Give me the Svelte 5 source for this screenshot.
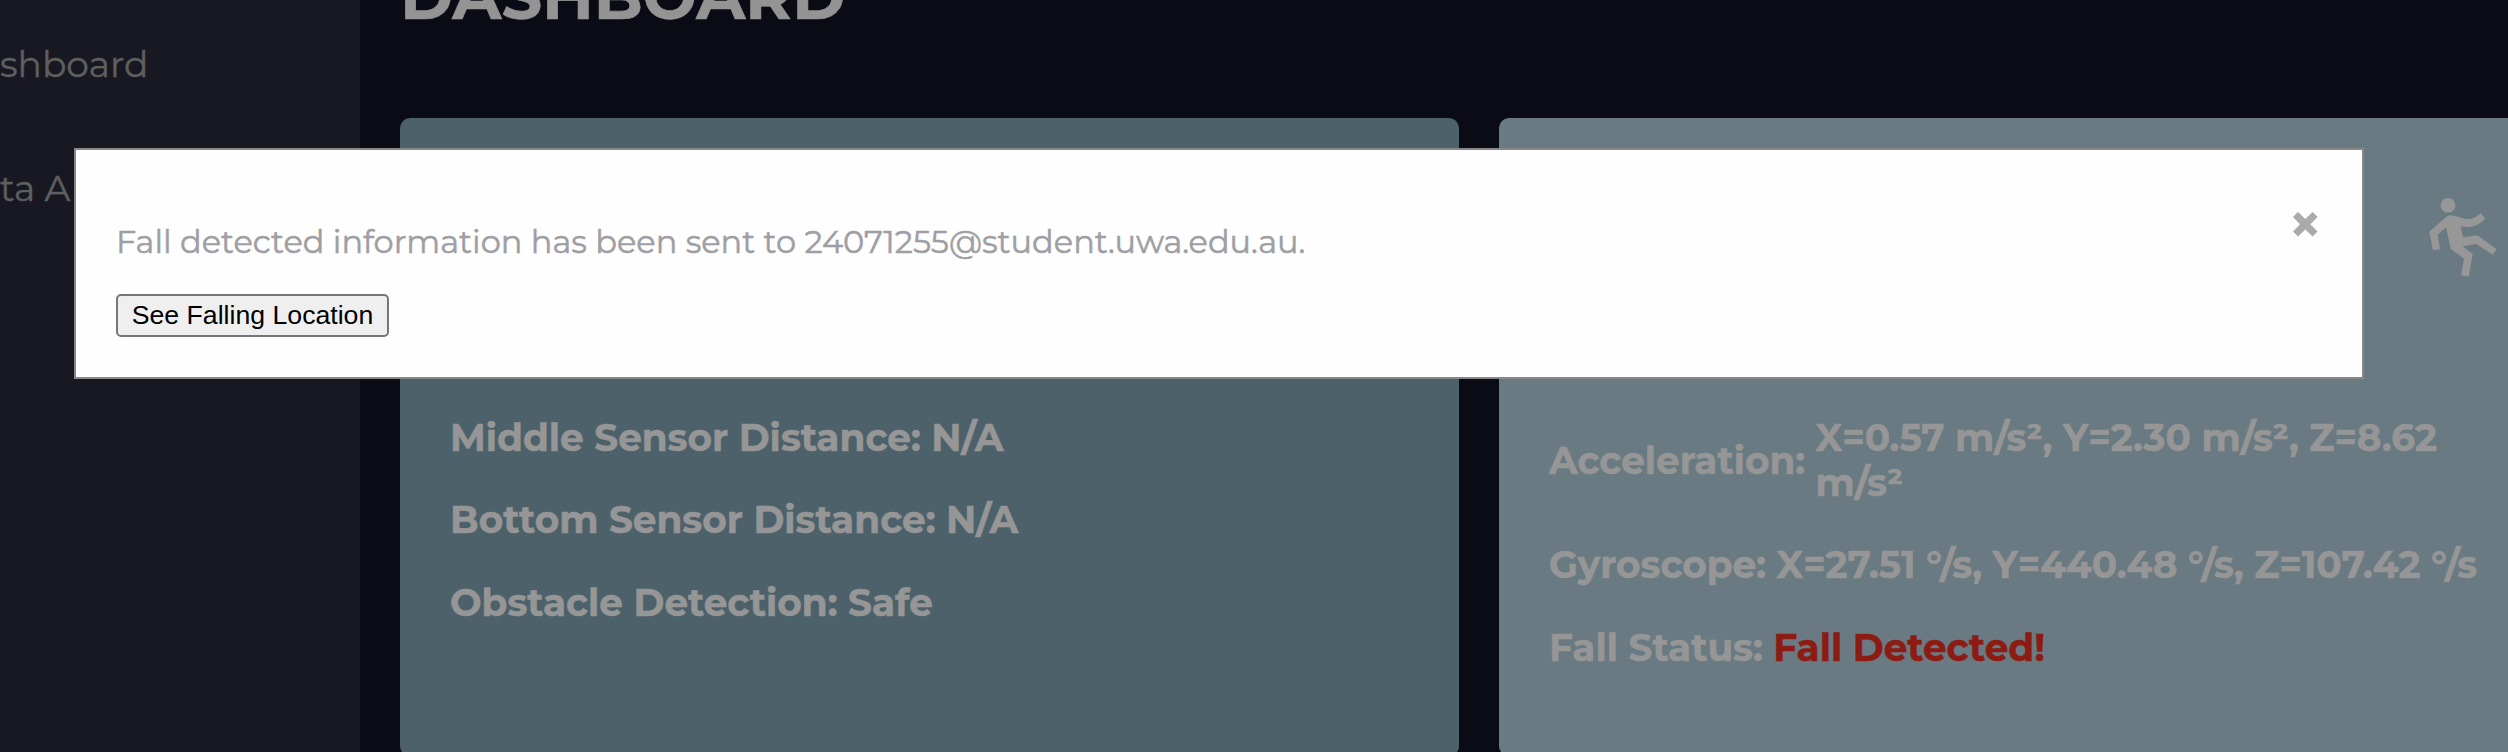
<script>
  const nav = ['shboard', 'ta A'];
  const distances = [
    'Middle Sensor Distance: N/A',
    'Bottom Sensor Distance: N/A',
    'Obstacle Detection: Safe'
  ];
</script>

<div class="app">
  <aside>
    {#each nav as label}
      <div class="link">{label}</div>
    {/each}
  </aside>

  <main>
    <h1>DASHBOARD</h1>
    <div class="cards">
      <section class="card">
        <div class="head"></div>
        {#each distances as text}
          <h3>{text}</h3>
        {/each}
      </section>

      <section class="card motion">
        <div class="head">
          <svg viewBox="84 50 210 242" width="70" height="80.67" fill="#979797">
            <circle cx="144" cy="75" r="22.3" />
            <path d="M138 110Q144 104 152 105Q163 106 177 110C190 114 201 118 215 115Q229 111 242 98L256 115Q231 140 204 140Q194 140 182 138L189 171L232 165L290 207L278 223L229 191L188 198L218 221L206 289L183 285L192 235L152 205L138 141L113 163L120 207L99 210L88 154Z" />
          </svg>
        </div>
        <h3>
          <span>Acceleration:</span>
          <span>X=0.57 m/s², Y=2.30 m/s², Z=8.62<br />m/s²</span>
        </h3>
        <h3>
          <span>Gyroscope:</span>
          <span>X=27.51 °/s, Y=440.48 °/s, Z=107.42 °/s</span>
        </h3>
        <h3>
          <span>Fall Status:</span>
          <span class="alert">Fall Detected!</span>
        </h3>
      </section>
    </div>
  </main>

  <div class="modal">
    <div class="content">
      <p>Fall detected information has been sent to 24071255@student.uwa.edu.au.</p>
      <button type="button">See Falling Location</button>
    </div>
    <svg class="close" viewBox="0 0 74 74" width="24.6" height="24.6" fill="#aaa">
      <path d="M15 0L37 21L59 0L74 15L52 37L74 59L59 74L37 53L15 74L0 59L21 37L0 15Z" />
    </svg>
  </div>
</div>

<style>
  .app {
    position: relative;
    display: flex;
    width: 2508px;
    height: 752px;
    overflow: hidden;
    background: #0b0b15;
    font-family: Montserrat, Inter, sans-serif;
  }
  aside {
    flex: 0 0 360px;
    box-sizing: border-box;
    padding-top: 34px;
    display: flex;
    flex-direction: column;
    gap: 64px;
    background: #181822;
  }
  .link {
    height: 60px;
    line-height: 60px;
    font-size: 36px;
    color: #5f5f60;
    white-space: nowrap;
    -webkit-text-stroke: 0.4px currentColor;
  }
  main {
    flex: none;
    padding-left: 40px;
  }
  h1 {
    margin: -36px 0 90px;
    height: 64px;
    font-size: 64px;
    line-height: 64px;
    color: #949494;
    -webkit-text-stroke: 0.6px currentColor;
  }
  .cards {
    display: grid;
    grid-template-columns: 1059px 1059px;
    gap: 40px;
  }
  .card {
    box-sizing: border-box;
    height: 638px;
    padding: 50px;
    border-radius: 10px;
    background: #4d616b;
  }
  .motion {
    background: #6a7a82;
  }
  .head {
    display: flex;
    justify-content: flex-end;
    box-sizing: border-box;
    height: 247px;
    padding: 28.67px 10px 0 0;
  }
  h3 {
    display: flex;
    align-items: center;
    gap: 10.4px;
    margin: 0 0 37.4px;
    font-size: 37.44px;
    line-height: 45px;
    color: #969696;
    white-space: nowrap;
    -webkit-text-stroke: 0.5px currentColor;
  }
  .alert {
    color: #8c1c13;
  }
  .modal {
    position: absolute;
    left: 74px;
    top: 148px;
    box-sizing: border-box;
    display: flex;
    justify-content: space-between;
    width: 2290px;
    height: 231px;
    padding: 40px;
    border: 2px solid #888;
    background: #fefefe;
  }
  p {
    margin: 32px 0 32px;
    height: 40px;
    line-height: 40px;
    font-size: 32px;
    color: #9e9ea4;
    white-space: nowrap;
    -webkit-text-stroke: 0.5px currentColor;
  }
  button {
    display: block;
    box-sizing: border-box;
    width: 273px;
    height: 43px;
    padding: 0;
    border: 2px solid #767676;
    border-radius: 5px;
    background: #efefef;
    color: #000;
    font-family: "Liberation Sans", Arial, sans-serif;
    font-size: 26.67px;
    line-height: 37px;
    text-align: center;
    white-space: nowrap;
  }
  .close {
    margin: 22px 4.5px 0 0;
  }
</style>
